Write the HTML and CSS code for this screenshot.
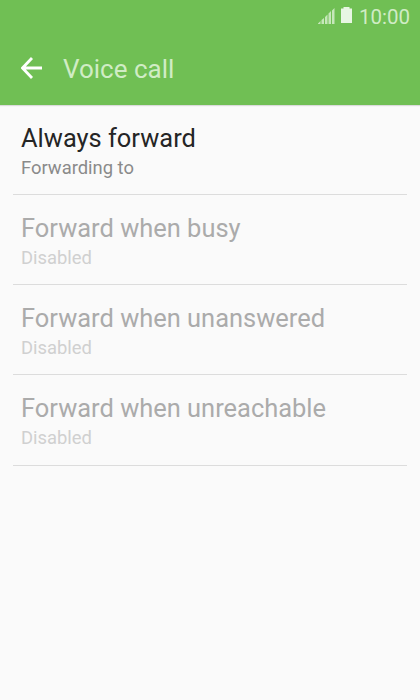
FILE: index.html
```
<!DOCTYPE html>
<html lang="en">
<head>
    <meta charset="UTF-8">
    <meta name="viewport" content="width=device-width, initial-scale=1.0">
    <title>Voice call</title>
    <link rel="stylesheet" href="styles.css">
</head>
<body>
    <header class="header">
        <div class="status-bar">
            <svg class="signal" width="17" height="16" viewBox="0 0 17 16">
                <path d="M0 15.500L2.500 13V16H0zM3.500 12L6 10V16H3.500zM7 9L9.500 6.500V16H7zM10.500 5.500L13 3V16h-2.500zM14 2.500L16.500 0V16H14z"/>
            </svg>
            <svg class="battery" width="11" height="16" viewBox="0 0 11 16">
                <path d="M2.500 0h6v1.500H11V16H0V1.500h2.500z"/>
            </svg>
            <span class="clock">10:00</span>
        </div>
        <div class="title-bar">
            <svg class="back" width="22" height="22" viewBox="0 0 22 22">
                <path d="M11 1L1.500 11L11 21M1.500 11H21"/>
            </svg>
            <h1>Voice call</h1>
        </div>
    </header>
    <ul class="options">
        <li class="option">
            <div class="name">Always forward</div>
            <div class="detail">Forwarding to</div>
        </li>
        <li class="option disabled">
            <div class="name">Forward when busy</div>
            <div class="detail">Disabled</div>
        </li>
        <li class="option disabled">
            <div class="name">Forward when unanswered</div>
            <div class="detail">Disabled</div>
        </li>
        <li class="option disabled">
            <div class="name">Forward when unreachable</div>
            <div class="detail">Disabled</div>
        </li>
    </ul>
</body>
</html>
```

FILE: styles.css
```
body {
    margin: 0;
    height: 700px;
    background-color: #fafafa;
    font-family: Roboto, sans-serif;
    overflow: hidden;
}

.header {
    height: 105px;
    background-color: #70bf54;
    box-shadow: 0 1px 1px rgba(0, 0, 0, 0.12);
}

.status-bar {
    display: flex;
    align-items: center;
    justify-content: flex-end;
    height: 32px;
    padding-right: 10px;
}

.signal {
    fill: #c6e7ba;
}

.battery {
    margin: 0 7px 2px 6px;
    fill: #e8f6e3;
}

.clock {
    margin-top: 2px;
    color: #d0ecc5;
    font-size: 20.5px;
    line-height: 24px;
}

.title-bar {
    display: flex;
    align-items: center;
    height: 72px;
    padding-left: 21px;
}

.back {
    fill: none;
    stroke: #fff;
    stroke-width: 2.8;
}

h1 {
    margin: 1px 0 0 20px;
    color: #d0ecc5;
    font-size: 26px;
    font-weight: 400;
}

.options {
    margin: 0;
    padding: 0 13px;
    list-style: none;
}

.option {
    box-sizing: border-box;
    height: 90.15px;
    padding: 18px 8px 0;
    border-bottom: 1px solid #dcdcdc;
}

.name {
    color: #252525;
    font-size: 25.45px;
    line-height: 30px;
}

.detail {
    margin-top: 4px;
    color: #8a8a8a;
    font-size: 18.4px;
    line-height: 22px;
}

.disabled .name {
    color: #ababab;
}

.disabled .detail {
    color: #d0d0d0;
}
```
